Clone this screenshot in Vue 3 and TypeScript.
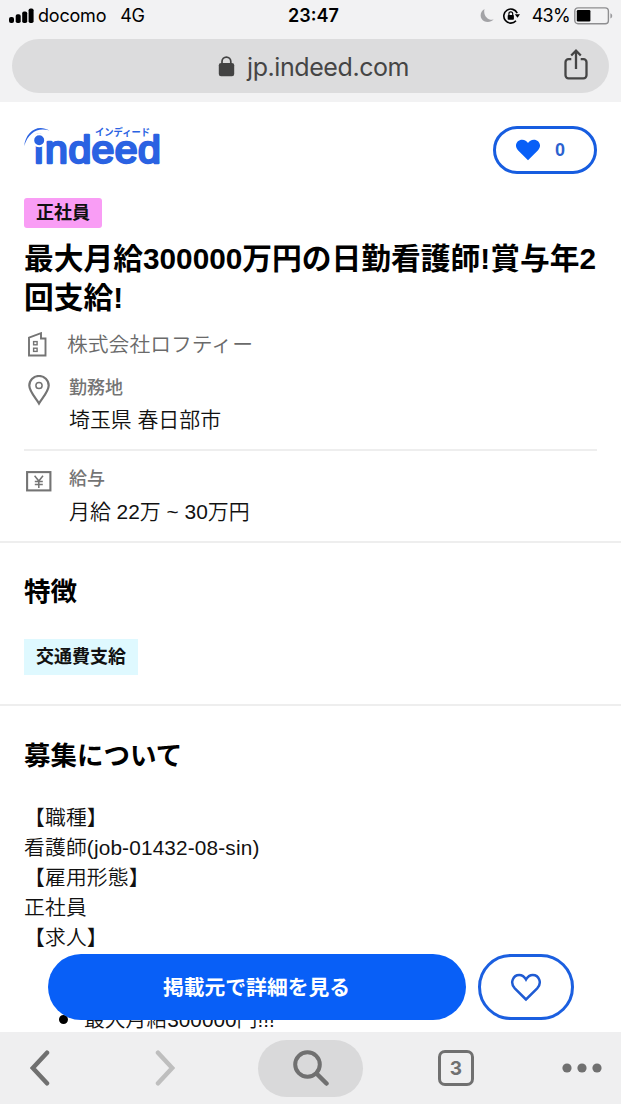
<script setup lang="ts">
interface Section {
  label: string
  value: string
  icon: 'pin' | 'yen'
}

const sections: Section[] = [
  { label: '勤務地', value: '埼玉県 春日部市', icon: 'pin' },
  { label: '給与', value: '月給 22万 ~ 30万円', icon: 'yen' },
]
const lines: string[] = ['【職種】', '看護師(job-01432-08-sin)', '【雇用形態】', '正社員', '【求人】']
</script>

<template>
  <div class="phone">
    <header class="chrome">
      <div class="status">
        <div class="carrier">
          <svg class="signal" width="25" height="16" viewBox="0 0 25 16">
            <rect x="0" y="9" width="5" height="6" rx="2" />
            <rect x="6.7" y="6.3" width="5" height="8.7" rx="1.8" />
            <rect x="13.2" y="3.4" width="5" height="11.6" rx="1.8" />
            <rect x="19.6" y="0.5" width="5" height="14.5" rx="1.8" />
          </svg>
          <span class="operator">docomo</span>
          <span class="network">4G</span>
        </div>
        <span class="clock">23:47</span>
        <div class="indicators">
          <svg class="moon" width="14" height="16" viewBox="0 0 14 16">
            <path d="M4.5 1C.8 3.2-.4 7.5 1.6 10.8c2.300 3.900 8.800 4.400 12 .8C7.300 12.500 3 7 4.500 1z" fill="#a3a3a6" />
          </svg>
          <svg class="rotation" width="18" height="16" viewBox="0 0 18 16" fill="none" stroke="#000" stroke-width="1.6">
            <path d="M14.200 5.200A7 7 0 1 0 13 12.800" />
            <path d="M11.800 6.300h5.200l-2.500 3.400z" fill="#000" stroke="none" />
            <rect x="4.700" y="6.900" width="6.200" height="4.800" rx=".8" fill="#000" stroke="none" />
            <path d="M5.900 7.200V5.700a1.900 1.900 0 0 1 3.800 0v1.500" stroke-width="1.200" />
          </svg>
          <span class="percent">43%</span>
          <svg class="battery" width="39" height="18" viewBox="0 0 39 18">
            <rect x=".8" y=".9" width="33.600" height="15.800" rx="3.200" fill="none" stroke="#8e8e90" stroke-width="1.400" />
            <rect x="2.800" y="3" width="13.600" height="11.500" rx="1.200" />
            <path d="M36.400 6.200c2.400.7 2.400 4.500 0 5.200z" fill="#9b9b9d" />
          </svg>
        </div>
      </div>
      <div class="address">
        <svg class="lock" width="17" height="21" viewBox="0 0 17 21">
          <path d="M4 8V5.500a4.400 4.400 0 0 1 8.800 0V8" fill="none" stroke="#434343" stroke-width="1.700" />
          <rect x=".8" y="7" width="15.400" height="13.300" rx="2.300" fill="#434343" />
        </svg>
        <span class="host">jp.indeed.com</span>
        <svg class="share" width="24" height="31" viewBox="0 0 24 31" fill="none" stroke="#454545" stroke-width="2.300">
          <path d="M7.300 10.200H4.500a3 3 0 0 0-3 3v13.100a3 3 0 0 0 3 3h15a3 3 0 0 0 3-3V13.200a3 3 0 0 0-3-3h-2.800" />
          <path d="M12 20V2M7.200 6.500 12 1.700l4.800 4.800" />
        </svg>
      </div>
    </header>

    <main class="page">
      <div class="brand">
        <svg class="logo" width="138" height="48" viewBox="0 0 138 48" fill="#2a62e2">
          <text class="wordmark" transform="scale(1.08 1)" x="9.400 19.400 41.100 62.400 84 105.600" y="36.600">indeed</text>
          <circle cx="15.200" cy="14.300" r="6" stroke="#fff" stroke-width="2" />
          <text class="ruby" x="71" y="9.500" textLength="55" lengthAdjust="spacingAndGlyphs">インディード</text>
          <path d="M.2 20C1.500 6.500 13-2.800 25.500 4.600 14.500.8 4.500 6 .2 20z" />
        </svg>
        <button class="saved">
          <svg width="24" height="22" viewBox="0 0 24 22">
            <path d="M12 21.300 2.200 11.600C-2.500 6.500 1 .7 6.200.7c2.600 0 4.600 1.400 5.800 3.400C13.200 2.100 15.200.7 17.800.7c5.200 0 8.700 5.800 4 10.900z" fill="#085ff7" />
          </svg>
          <span>0</span>
        </button>
      </div>

      <span class="tag employment">正社員</span>
      <h1>最大月給300000万円の日勤看護師!賞与年2<br />回支給!</h1>
      <div class="company">
        <svg width="19" height="25" viewBox="0 0 19 25" fill="none" stroke="#747474" stroke-width="1.900">
          <path d="M1 23.500V5.700L13 1.200v5.300h4.500v17z" />
          <rect x="5.600" y="9.600" width="3.500" height="3.200" stroke-width="1.400" />
          <rect x="5.600" y="16.200" width="3.500" height="3.200" stroke-width="1.400" />
        </svg>
        <span>株式会社ロフティー</span>
      </div>

      <section v-for="item in sections" :key="item.label" class="fact" :class="item.icon">
        <svg v-if="item.icon === 'pin'" width="22" height="32" viewBox="0 0 22 32" fill="none" stroke="#747474">
          <path d="M11 28.500C8.500 24 1.300 16.500 1.300 10.500a9.700 9.500 0 0 1 19.400 0c0 6-7.200 13.500-9.700 18z" stroke-width="2.200" />
          <circle cx="11" cy="10.500" r="3.100" stroke-width="1.500" />
        </svg>
        <svg v-else width="26" height="22" viewBox="0 0 26 22" fill="none" stroke="#747474">
          <rect x="1.100" y="1.100" width="23.300" height="18.300" stroke-width="2.100" />
          <path d="M8.600 4.700 12.800 10l4.200-5.300M12.800 10v7M8.800 10.600h8M8.800 13.500h8" stroke-width="1.500" />
        </svg>
        <div>
          <div class="label">{{ item.label }}</div>
          <div class="value">{{ item.value }}</div>
        </div>
      </section>

      <section class="features">
        <h2>特徴</h2>
        <span class="tag feature">交通費支給</span>
      </section>

      <section class="details">
        <h2>募集について</h2>
        <p v-for="line in lines" :key="line">{{ line }}</p>
        <ul>
          <li>最大月給300000円!!!</li>
        </ul>
      </section>

      <div class="actions">
        <button class="apply">掲載元で詳細を見る</button>
        <button class="keep">
          <svg width="32" height="29" viewBox="0 0 32 29" fill="none" stroke="#1f5bd3" stroke-width="2.500">
            <path d="M16 26.500 4.800 15.400C-.5 9.800 3.200 2 9.200 2c3.100 0 5.300 1.800 6.800 4.500C17.500 3.800 19.700 2 22.800 2c6 0 9.700 7.800 4.400 13.400z" />
          </svg>
        </button>
      </div>
    </main>

    <nav class="toolbar">
      <svg class="back" width="20" height="36" viewBox="0 0 20 36"><path d="M17 2.700 2.800 18 17 33.300" /></svg>
      <svg class="forward" width="20" height="36" viewBox="0 0 20 36"><path d="M3 2.700 17.200 18 3 33.300" /></svg>
      <button class="search">
        <svg width="36" height="36" viewBox="0 0 36 36"><circle cx="14.500" cy="14.500" r="12.300" /><path d="m23.500 23.500 10 10" /></svg>
      </button>
      <div class="tabs">3</div>
      <svg class="more" width="40" height="10" viewBox="0 0 40 10"><circle cx="5" cy="5" r="4.600" /><circle cx="20" cy="5" r="4.600" /><circle cx="35" cy="5" r="4.600" /></svg>
    </nav>
  </div>
</template>

<style>
body {
  margin: 0;
  overflow: hidden;
}
</style>

<style scoped>
.phone {
  display: flex;
  flex-direction: column;
  width: 621px;
  height: 1104px;
  overflow: hidden;
  background: #fff;
  color: #111;
  font-family: "Liberation Sans", "Noto Sans CJK JP", sans-serif;
}
button {
  box-sizing: border-box;
  margin: 0;
  padding: 0;
  border: 0;
  font-family: inherit;
}
svg {
  display: block;
  flex: none;
}
.chrome {
  box-sizing: border-box;
  flex: none;
  height: 102px;
  background: #f2f2f3;
  font-family: Inter, sans-serif;
}
.status {
  display: grid;
  grid-template-columns: 1fr auto 1fr;
  align-items: center;
  height: 32px;
  padding: 0 8px 0 9px;
  margin-bottom: 7px;
  color: #000;
  font-size: 18px;
  line-height: 32px;
}
.carrier,
.indicators {
  display: flex;
  align-items: center;
}
.operator {
  margin: 0 14px 0 4px;
  letter-spacing: -0.2px;
}
.network {
  letter-spacing: -0.3px;
}
.clock {
  padding-left: 5px;
  font-weight: 600;
}
.indicators {
  justify-content: flex-end;
}
.rotation {
  margin: 0 11px 0 9px;
}
.percent {
  margin-right: 4px;
  letter-spacing: -0.7px;
}
.address {
  display: flex;
  align-items: center;
  height: 54px;
  margin: 0 12px 0 12px;
  border-radius: 27px;
  background: #dcdcdd;
  color: #454545;
}
.lock {
  margin-left: 206px;
}
.host {
  width: 170px;
  margin-left: 12px;
  padding-top: 1px;
  font-size: 25px;
  line-height: 54px;
  letter-spacing: -0.42px;
}
.share {
  margin: -3px 21px 0 auto;
}
.page {
  position: relative;
  flex: none;
  height: 930px;
  overflow: hidden;
}
.brand {
  display: flex;
  justify-content: space-between;
  height: 48px;
  margin: 24px 24px 24px;
}
.logo {
  overflow: visible;
}
.wordmark {
  font: 38px "Liberation Sans", sans-serif;
  stroke: #2a62e2;
  stroke-width: 2.400px;
  stroke-linejoin: round;
}
.ruby {
  font: bold 10px "Noto Sans CJK JP", sans-serif;
}
.saved {
  display: flex;
  align-items: center;
  width: 104px;
  height: 48px;
  padding-left: 20px;
  border: 3px solid #175de0;
  border-radius: 24px;
  background: #fff;
  color: #2c62cf;
  font-weight: bold;
  font-size: 18px;
}
.saved span {
  margin-left: 15px;
}
.tag {
  display: block;
  width: max-content;
  margin-left: 24px;
  padding: 0 12px;
  color: #111;
  font-weight: bold;
  font-size: 18px;
}
.employment {
  height: 30px;
  border-radius: 3px;
  background: #f99df5;
  line-height: 30px;
}
h1 {
  margin: 11px 0 0 24px;
  color: #000;
  font-size: 29.750px;
  line-height: 39px;
  white-space: nowrap;
}
.company {
  display: flex;
  align-items: center;
  height: 32px;
  margin: 11px 24px 0 28px;
  color: #6a6a6a;
  font-size: 20.800px;
  line-height: 32px;
}
.company span {
  margin-left: 20px;
  padding-top: 2px;
}
.fact {
  display: flex;
  box-sizing: border-box;
}
.pin {
  height: 91px;
  margin: 0 24px;
  padding: 15px 0 0 4px;
  border-bottom: 2px solid #eee;
}
.yen {
  height: 92px;
  padding: 15px 0 0 26px;
  border-bottom: 2px solid #eee;
}
.pin > svg {
  margin: 0 19px 0 0;
}
.yen > svg {
  margin: 5px 17px 0 0;
}
.label {
  color: #747474;
  font-weight: 500;
  font-size: 18px;
  line-height: 26px;
}
.value {
  margin-top: 3px;
  font-size: 20.900px;
  line-height: 34px;
}
.pin .value {
  margin-top: 2px;
}
.company,
.value,
.details p,
li {
  font-weight: 350;
}
h2 {
  margin: 0;
  color: #000;
  font-size: 26.500px;
  line-height: 40px;
}
.features {
  box-sizing: border-box;
  height: 163px;
  padding-top: 29px;
  border-bottom: 2px solid #eee;
}
.features h2 {
  margin-left: 24px;
}
.feature {
  height: 36px;
  margin-top: 27px;
  background: #dff9ff;
  line-height: 36px;
}
.details {
  padding: 30px 24px 0;
}
.details h2 {
  margin-bottom: 27px;
}
.details p {
  margin: 0;
  font-size: 20.800px;
  line-height: 30px;
  letter-spacing: 0.150px;
}
ul {
  margin: 52px 0 0;
  padding: 0;
  list-style: none;
}
li {
  display: flex;
  align-items: center;
  font-size: 20.800px;
  line-height: 30px;
}
li::before {
  width: 9px;
  height: 9px;
  margin: -2px 16px 0 35px;
  border-radius: 50%;
  background: #000;
  content: "";
}
.actions {
  position: absolute;
  right: 47px;
  bottom: 12px;
  left: 48px;
  display: flex;
  gap: 12px;
  height: 66px;
}
.apply {
  width: 418px;
  padding: 0 1px 2px 0;
  border-radius: 33px;
  background: #085ff7;
  color: #fff;
  font-weight: bold;
  font-size: 20.800px;
}
.keep {
  display: flex;
  align-items: center;
  justify-content: center;
  width: 96px;
  border: 3px solid #1b5fe0;
  border-radius: 33px;
  background: #fff;
}
.toolbar {
  display: flex;
  flex: none;
  align-items: center;
  height: 72px;
  background: #efeff0;
}
.toolbar path,
.toolbar .search circle {
  fill: none;
  stroke: #707070;
  stroke-width: 4.500px;
  stroke-linecap: round;
}
.toolbar .search circle {
  stroke-width: 4px;
}
.back {
  margin-left: 30px;
}
.toolbar .forward path {
  stroke: #bebebe;
}
.forward {
  margin-left: 105px;
}
.search {
  display: flex;
  align-items: center;
  justify-content: center;
  width: 105px;
  height: 57px;
  margin-left: 83px;
  border-radius: 29px;
  background: #d9d9da;
}
.tabs {
  display: flex;
  box-sizing: border-box;
  align-items: center;
  justify-content: center;
  width: 36px;
  height: 36px;
  margin-left: 75px;
  border: 3.500px solid #707070;
  border-radius: 7px;
  color: #707070;
  font: 700 19px Inter, sans-serif;
}
.more {
  margin-left: 88px;
  fill: #707070;
}
</style>
